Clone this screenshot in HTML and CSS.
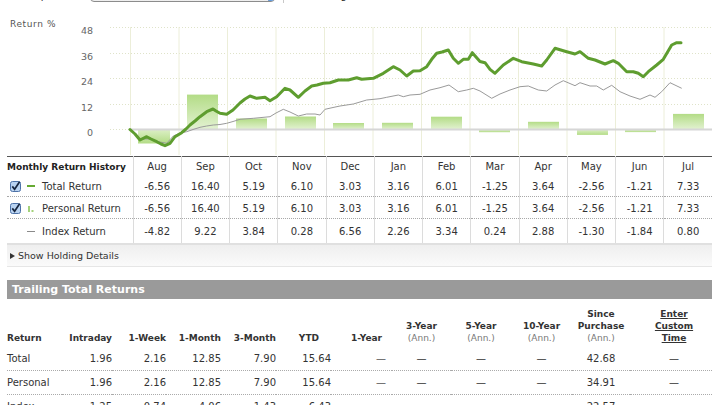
FILE: index.html
```html
<!DOCTYPE html>
<html>
<head>
<meta charset="utf-8">
<link rel="stylesheet" href="styles.css">
</head>
<body>
<div class="toolbar">
  <span class="tb-label">Compare to:</span>
  <div class="select"><span class="select-text">Morningstar U.S. Market Index</span><span class="select-btn"></span></div>
  <span class="tb-sep"></span>
  <div class="tb-group">
    <span class="tb-box"></span><span class="tb-text">Trailing 12 Months</span>
  </div>
  <div class="tb-group">
    <span class="tb-box"></span><span class="tb-text">Include Cash</span><span class="tb-new">NEW!</span><span class="tb-help">?</span><span class="tb-text">Learn more</span>
  </div>
</div>

<svg class="chart" width="720" height="153" viewBox="0 3 720 153">
  <defs>
    <linearGradient id="barPos" x1="0" y1="0" x2="0" y2="1">
      <stop offset="0" stop-color="#b3dc86"/>
      <stop offset="1" stop-color="#e3f2d2"/>
    </linearGradient>
    <linearGradient id="barNeg" x1="0" y1="0" x2="0" y2="1">
      <stop offset="0" stop-color="#dcefc6"/>
      <stop offset="1" stop-color="#b3dc86"/>
    </linearGradient>
  </defs>
  <text class="ylabel-title" x="10" y="27">Return %</text>
  <g class="yticks">
    <text x="93" y="34">48</text>
    <text x="93" y="59.5">36</text>
    <text x="93" y="85">24</text>
    <text x="93" y="111">12</text>
    <text x="93" y="136">0</text>
  </g>
  <g class="hgrid">
    <line x1="110" y1="27.5" x2="711" y2="27.5"/>
    <line x1="110" y1="53.5" x2="711" y2="53.5"/>
    <line x1="110" y1="78.5" x2="711" y2="78.5"/>
    <line x1="110" y1="104.5" x2="711" y2="104.5"/>
    <line x1="110" y1="129.5" x2="130" y2="129.5"/>
  </g>
  <g class="vgrid">
    <line x1="130.5" y1="27" x2="130.5" y2="155"/>
    <line x1="179" y1="27" x2="179" y2="155"/>
    <line x1="227.5" y1="27" x2="227.5" y2="155"/>
    <line x1="276" y1="27" x2="276" y2="155"/>
    <line x1="324.5" y1="27" x2="324.5" y2="155"/>
    <line x1="373" y1="27" x2="373" y2="155"/>
    <line x1="421.5" y1="27" x2="421.5" y2="155"/>
    <line x1="470" y1="27" x2="470" y2="155"/>
    <line x1="518.5" y1="27" x2="518.5" y2="155"/>
    <line x1="567" y1="27" x2="567" y2="155"/>
    <line x1="615.5" y1="27" x2="615.5" y2="155"/>
    <line x1="664" y1="27" x2="664" y2="155"/>
  </g>
  <g class="bars">
    <rect x="138" y="129.5" width="32" height="14" fill="url(#barNeg)"/>
    <rect x="187" y="94.6" width="31" height="34.9" fill="url(#barPos)"/>
    <rect x="236" y="118.5" width="31" height="11" fill="url(#barPos)"/>
    <rect x="285" y="116.5" width="31" height="13" fill="url(#barPos)"/>
    <rect x="333" y="123" width="31" height="6.5" fill="url(#barPos)"/>
    <rect x="382" y="122.8" width="31" height="6.7" fill="url(#barPos)"/>
    <rect x="431" y="116.7" width="31" height="12.8" fill="url(#barPos)"/>
    <rect x="479" y="129.5" width="31" height="2.7" fill="url(#barNeg)"/>
    <rect x="528" y="121.8" width="31" height="7.7" fill="url(#barPos)"/>
    <rect x="577" y="129.5" width="31" height="5.4" fill="url(#barNeg)"/>
    <rect x="625" y="129.5" width="31" height="2.6" fill="url(#barNeg)"/>
    <rect x="673" y="113.9" width="31" height="15.6" fill="url(#barPos)"/>
  </g>
  <line class="zero" x1="130" y1="129.5" x2="712" y2="129.5"/>
  <polyline class="index-line" points="130,129.5 140,139 150,139 160,142 166.7,143.3 173.3,136 180,133 186.7,131.7 193,129.5 200,127.3 206.7,126 213.3,125 220,124.5 226.7,123.3 233,121.5 240,119.3 253.3,118.3 270,116.7 276,113 283.3,109.3 290,112 298.3,116 306.7,114 315,114 320,115 325,109.3 333,107.5 340,106 353.3,104 366.7,100 380,98.7 386.7,97.3 398.3,95 403.3,96.7 410,95 420,94.3 430,90 440,87.7 449,85 458.3,91.7 466.7,90 473.3,88.3 480,91 491.7,98.3 500,94 510,90 520,86.7 528.3,86 538.3,90 546.7,91 555,85 563.3,80.7 575,85.7 580,82.7 590,86 596.7,86 603.3,90 611.7,85.3 620,91.7 630,96 640,99.3 650,95 655,97.3 661.7,91.7 670,82.7 681.7,88.3"/>
  <polyline class="total-line" points="130,129.5 135,134 140,140 146.7,136.7 151,139 156.7,141.7 161,144 165,145.7 170,143.3 175,136.7 181.7,132.7 186,129 190,125 195,121 200,116.7 206.7,111.7 213,109 216,111 220,113.3 226.7,114.3 233,110 240,103 245,99 250,96 256.7,98.3 265,97.3 270,100.7 276.7,96.7 285,88.3 290,90 298.3,97.3 305,91 311.7,86 317,85 323.3,83.3 330,82.7 338.3,80 348.3,80 356.7,77.7 361.7,79.3 373.3,78.3 383.3,73.3 393.3,66.7 400,70 406.7,76 413.3,71 420,70.7 426.7,66.7 431.7,59.3 436.7,53.3 442,52 448.3,50 453.3,58.3 458.3,63.3 463.3,59.3 468.3,59.3 472.3,52.7 476,57 480,61.5 485,62.7 490,69.3 495,73.3 503.3,65 513.3,58.3 521.7,61.7 533.3,64 541.7,66 546.7,60 555,48.3 566.7,51.7 575,54 580,51.7 588.3,58.3 595,60 605,64 613.3,60.7 618.3,63.3 626.7,71.7 633.3,71.7 638.3,73.3 643.3,76.7 648.3,71.7 656.7,65 663.3,59.3 671.7,45 676.7,42.7 681,42.7"/>
</svg>

<table class="monthly">
  <colgroup>
    <col class="c-name"><col><col><col><col><col><col><col><col><col><col><col><col>
  </colgroup>
  <thead>
    <tr>
      <th class="name-head">Monthly Return History</th>
      <th>Aug</th><th>Sep</th><th>Oct</th><th>Nov</th><th>Dec</th><th>Jan</th><th>Feb</th><th>Mar</th><th>Apr</th><th>May</th><th>Jun</th><th>Jul</th>
    </tr>
  </thead>
  <tbody>
    <tr class="r1">
      <td class="name">
        <div class="name-wrap">
          <svg class="cb" width="11" height="11" viewBox="0 0 11 11"><rect x="0.5" y="0.5" width="10" height="10" rx="2" fill="#b9d3f1" stroke="#4d72a8"/><path d="M2.3 5.4 L4.6 8.3 L9.6 0.8" fill="none" stroke="#17263f" stroke-width="1.7"/></svg>
          <span class="leg leg-total"></span>
          <span>Total Return</span>
        </div>
      </td>
      <td>-6.56</td><td>16.40</td><td>5.19</td><td>6.10</td><td>3.03</td><td>3.16</td><td>6.01</td><td>-1.25</td><td>3.64</td><td>-2.56</td><td>-1.21</td><td>7.33</td>
    </tr>
    <tr class="r2">
      <td class="name">
        <div class="name-wrap">
          <svg class="cb" width="11" height="11" viewBox="0 0 11 11"><rect x="0.5" y="0.5" width="10" height="10" rx="2" fill="#b9d3f1" stroke="#4d72a8"/><path d="M2.3 5.4 L4.6 8.3 L9.6 0.8" fill="none" stroke="#17263f" stroke-width="1.7"/></svg>
          <svg class="leg-bars" width="8" height="8" viewBox="0 0 8 8"><rect x="1" y="1" width="2" height="6" fill="#a3d17a"/><rect x="4.5" y="5" width="2" height="2" fill="#a3d17a"/></svg>
          <span>Personal Return</span>
        </div>
      </td>
      <td>-6.56</td><td>16.40</td><td>5.19</td><td>6.10</td><td>3.03</td><td>3.16</td><td>6.01</td><td>-1.25</td><td>3.64</td><td>-2.56</td><td>-1.21</td><td>7.33</td>
    </tr>
    <tr class="r3">
      <td class="name">
        <div class="name-wrap">
          <span class="cb-space"></span>
          <span class="leg leg-index"></span>
          <span>Index Return</span>
        </div>
      </td>
      <td>-4.82</td><td>9.22</td><td>3.84</td><td>0.28</td><td>6.56</td><td>2.26</td><td>3.34</td><td>0.24</td><td>2.88</td><td>-1.30</td><td>-1.84</td><td>0.80</td>
    </tr>
  </tbody>
</table>

<div class="holding"><span class="tri"></span>Show Holding Details</div>

<div class="trail-head">Trailing Total Returns</div>

<table class="trailing">
  <colgroup>
    <col class="t0"><col class="t1"><col class="t2"><col class="t3"><col class="t4"><col class="t5"><col class="t6"><col class="t7"><col class="t8"><col class="t9"><col class="t10"><col class="t11">
  </colgroup>
  <thead>
    <tr>
      <th class="left">Return</th>
      <th class="right">Intraday</th>
      <th class="right">1-Week</th>
      <th class="right">1-Month</th>
      <th class="right">3-Month</th>
      <th class="right ytd">YTD</th>
      <th class="right oneyr">1-Year</th>
      <th class="center">3-Year<br><span class="ann">(Ann.)</span></th>
      <th class="center">5-Year<br><span class="ann">(Ann.)</span></th>
      <th class="center">10-Year<br><span class="ann">(Ann.)</span></th>
      <th class="center">Since<br>Purchase<br><span class="ann">(Ann.)</span></th>
      <th class="center custom"><span class="link">Enter</span><br><span class="link">Custom</span><br><span class="link">Time</span></th>
    </tr>
  </thead>
  <tbody>
    <tr class="dotted">
      <td class="left">Total</td>
      <td class="right">1.96</td><td class="right">2.16</td><td class="right">12.85</td><td class="right">7.90</td><td class="right">15.64</td>
      <td class="right oneyr-d">—</td><td class="center">—</td><td class="center">—</td><td class="center">—</td><td class="center">42.68</td><td class="center custom">—</td>
    </tr>
    <tr class="dotted">
      <td class="left">Personal</td>
      <td class="right">1.96</td><td class="right">2.16</td><td class="right">12.85</td><td class="right">7.90</td><td class="right">15.64</td>
      <td class="right oneyr-d">—</td><td class="center">—</td><td class="center">—</td><td class="center">—</td><td class="center">34.91</td><td class="center custom">—</td>
    </tr>
    <tr>
      <td class="left">Index</td>
      <td class="right">1.25</td><td class="right">0.74</td><td class="right">4.06</td><td class="right">1.43</td><td class="right">6.43</td>
      <td class="right oneyr-d">—</td><td class="center">—</td><td class="center">—</td><td class="center">—</td><td class="center">22.57</td><td class="center custom">—</td>
    </tr>
  </tbody>
</table>
</body>
</html>
```

FILE: styles.css
```css
html, body {
  margin: 0;
  padding: 0;
  background: #fff;
}
body {
  width: 720px;
  height: 405px;
  overflow: hidden;
  font-family: "DejaVu Sans", Verdana, sans-serif;
  color: #333;
}

/* top toolbar (mostly scrolled out of view) */
.toolbar {
  margin-top: -17px;
  height: 20px;
  display: flex;
  align-items: center;
  padding-left: 18px;
  font-size: 10px;
  color: #333;
}
.tb-label {
  width: 72px;
  padding-top: 4px;
}
.select {
  width: 185px;
  height: 18px;
  box-sizing: border-box;
  border: 1px solid #8c8c8c;
  border-radius: 4px;
  display: flex;
  justify-content: space-between;
  overflow: hidden;
  background: linear-gradient(#ffffff, #eeeeee);
}
.select-text {
  padding: 4px 0 0 26px;
  font-size: 10px;
  white-space: nowrap;
}
.select-btn {
  width: 17px;
  background: linear-gradient(#c4dcf6, #5b98dd);
  border-left: 1px solid #7a9cc8;
}
.tb-sep {
  width: 1px;
  height: 20px;
  background: #c8c8c8;
  margin: 0 9px 0 8px;
}
.tb-group {
  display: flex;
  align-items: center;
  width: 189px;
  white-space: nowrap;
}
.tb-group + .tb-group {
  width: auto;
}
.tb-box {
  width: 10px;
  height: 10px;
  border: 1px solid #8a8a8a;
  border-radius: 3px;
  background: #fff;
  margin-right: 6px;
}
.tb-text {
  padding-top: 4px;
}
.tb-new {
  padding-top: 4px;
  color: #e8211a;
  font-weight: bold;
  margin: 0 6px 0 4px;
}
.tb-help {
  width: 9px;
  height: 9px;
  border: 1px solid #999;
  border-radius: 50%;
  font-size: 7px;
  text-align: center;
  line-height: 9px;
  color: #777;
  margin-right: 5px;
}

/* chart */
.chart {
  display: block;
}
.ylabel-title {
  font-family: "DejaVu Sans", sans-serif;
  font-size: 9px;
  letter-spacing: 0.6px;
  fill: #555;
}
.yticks text {
  font-family: "DejaVu Sans", sans-serif;
  font-size: 9.5px;
  fill: #666;
  text-anchor: end;
}
.hgrid line {
  stroke: #dfe3c9;
  stroke-width: 1;
  stroke-dasharray: 1 2;
}
.vgrid line {
  stroke: #eceed9;
  stroke-width: 1;
}
.zero {
  stroke: #d6d6d6;
  stroke-width: 2;
}
.index-line {
  fill: none;
  stroke: #9a9a9a;
  stroke-width: 1;
  stroke-linejoin: round;
}
.total-line {
  fill: none;
  stroke: #5e9d2f;
  stroke-width: 3;
  stroke-linejoin: round;
  stroke-linecap: round;
}

/* monthly table */
.monthly {
  margin-left: 7px;
  width: 705px;
  border-collapse: collapse;
  table-layout: fixed;
  border-top: 1px solid #555;
  font-size: 10px;
}
.monthly .c-name {
  width: 126px;
}
.monthly th,
.monthly td {
  padding: 0;
  text-align: center;
  font-weight: normal;
  color: #333;
  border-left: 1px solid #dcdcdc;
  white-space: nowrap;
}
.monthly th {
  padding-top: 1px;
}
.monthly th.name-head,
.monthly td.name {
  border-left: none;
  text-align: left;
}
.monthly th.name-head {
  font-weight: bold;
  font-size: 9px;
  color: #222;
}
.monthly thead tr {
  height: 19px;
}
.monthly .r1 { height: 21px; }
.monthly .r2 { height: 22px; }
.monthly .r3 { height: 24px; }
.monthly .r1 td { padding-top: 1px; }
.monthly .r2 td { padding-top: 2px; }
.monthly .r3 td { padding-top: 2px; }
.monthly .r1 td,
.monthly .r2 td {
  border-bottom: 1px dotted #a8a8a8;
}
.name-wrap {
  display: flex;
  align-items: center;
  padding-left: 3px;
}
.cb {
  display: block;
  flex: none;
  overflow: visible;
}
.cb-space {
  width: 11px;
  flex: none;
}
.leg {
  width: 8px;
  margin: 0 7px 0 6px;
  flex: none;
}
.leg-total {
  height: 2px;
  background: #66aa33;
}
.leg-index {
  height: 1px;
  background: #8a8a8a;
}
.leg-bars {
  display: block;
  margin: 0 7px 0 6px;
  flex: none;
}

/* holding details */
.holding {
  margin: 0 8px 0 7px;
  height: 20px;
  box-sizing: content-box;
  border-top: 2px solid #e0e0e0;
  border-bottom: 1px solid #e6e6e6;
  background: linear-gradient(#efefef, #fafafa);
  display: flex;
  align-items: center;
  padding-left: 3px;
  padding-top: 1px;
  margin-bottom: -1px;
  font-size: 9.5px;
  color: #333;
}
.tri {
  width: 0;
  height: 0;
  border-left: 5px solid #333;
  border-top: 3px solid transparent;
  border-bottom: 3px solid transparent;
  margin-right: 3px;
}

/* trailing returns */
.trail-head {
  margin: 14px 8px 0 7px;
  height: 19px;
  line-height: 19px;
  background: #9a9a9a;
  color: #fff;
  font-weight: bold;
  font-size: 11px;
  padding-left: 5px;
}
.trailing {
  margin: 9px 0 0 7px;
  width: 705px;
  border-collapse: collapse;
  table-layout: fixed;
  font-size: 10px;
}
.trailing .t0 { width: 55px; }
.trailing .t1 { width: 50px; }
.trailing .t2 { width: 54px; }
.trailing .t3 { width: 55px; }
.trailing .t4 { width: 55px; }
.trailing .t5 { width: 55px; }
.trailing .t6 { width: 61px; }
.trailing .t7 { width: 59px; }
.trailing .t8 { width: 60px; }
.trailing .t9 { width: 61px; }
.trailing .t10 { width: 58px; }
.trailing .t11 { width: 82px; }
.trailing th {
  font-size: 9px;
  font-weight: bold;
  color: #333;
  vertical-align: bottom;
  line-height: 12.3px;
  padding: 0 0 3px;
  white-space: nowrap;
}
.trailing td {
  height: 23px;
  padding: 0;
  color: #333;
  white-space: nowrap;
}
.trailing tr.dotted td {
  border-bottom: 1px dotted #aaa;
}
.trailing .left { text-align: left; }
.trailing .right { text-align: right; }
.trailing .center { text-align: center; }
.trailing th.ytd { padding-right: 12px; }
.trailing th.oneyr { padding-right: 10px; }
.trailing td.oneyr-d { padding-right: 6px; color: #555; }
.trailing .custom { padding-left: 6px; }
.trailing .ann {
  font-weight: normal;
  color: #777;
}
.trailing .link {
  text-decoration: underline;
  color: #333;
}
```
